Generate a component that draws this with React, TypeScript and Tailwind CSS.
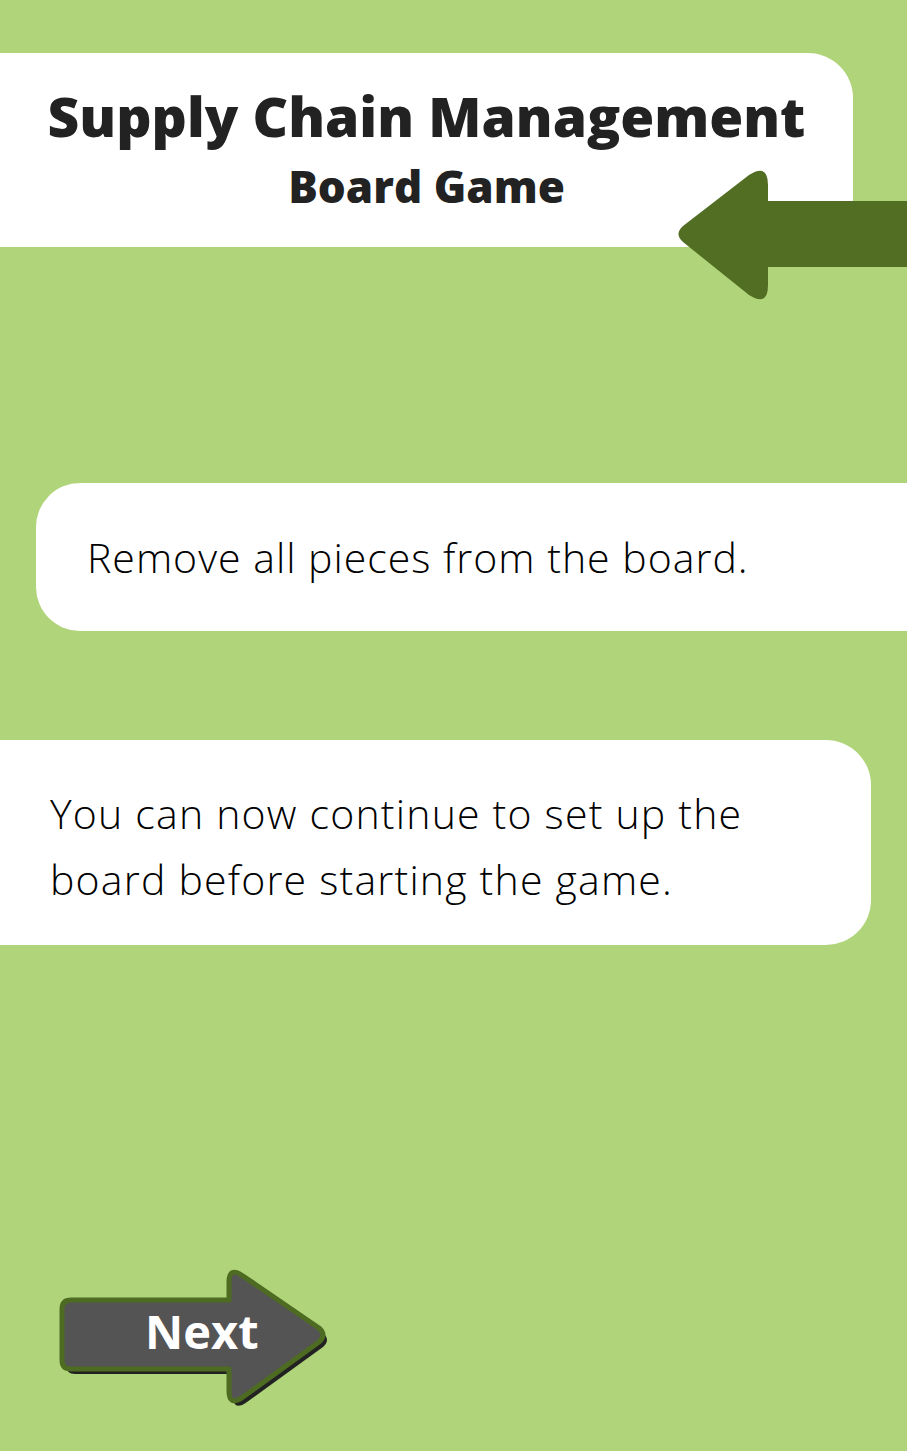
const LeftArrow = () => (
  <svg width="230" height="132" viewBox="0 0 230 132" className="absolute left-[677px] top-[116px]">
    <path
      d="M91 32 L230 32 L230 98 L91 98 L91 116 Q91 138 72 126 L6 73 Q-3 65 6 57 L72 6 Q91 -6 91 16 Z"
      fill="#526e23"
    />
  </svg>
);

const NextArrow = () => (
  <svg width="275" height="145" viewBox="0 0 275 145" className="absolute left-0 top-0">
    <g transform="translate(4 5)">
      <path
        d="M12 34 L170 34 L170 16 Q170 0 184 10 L260 62 Q268 69 260 76 L184 131 Q170 141 170 125 L170 103 L12 103 Q3 103 3 94 L3 43 Q3 34 12 34 Z"
        fill="#222222"
      />
    </g>
    <path
      d="M12 34 L170 34 L170 16 Q170 0 184 10 L260 62 Q268 69 260 76 L184 131 Q170 141 170 125 L170 103 L12 103 Q3 103 3 94 L3 43 Q3 34 12 34 Z"
      fill="#545454"
      stroke="#4d6b21"
      strokeWidth="5"
      strokeLinejoin="round"
    />
  </svg>
);

export default function App() {
  return (
    <div className="relative min-h-[1451px] overflow-hidden bg-[#b0d47a] pt-[53px] font-['Open_Sans',sans-serif]">
      <div className="relative flex h-[194px] w-[853px] flex-col items-center rounded-tr-[45px] bg-white text-[#222222]">
        <h1 className="mt-[35px] text-[55px] font-extrabold leading-none">Supply Chain Management</h1>
        <h2 className="mt-[21px] text-[44px] font-extrabold leading-none">Board Game</h2>
        <LeftArrow />
      </div>

      <div className="ml-[36px] mt-[236px] flex h-[148px] items-center rounded-l-[44px] bg-white pl-[51px]">
        <p className="text-[41px] font-[350] leading-none tracking-[1px] text-black">
          Remove all pieces from the board.
        </p>
      </div>

      <div className="mt-[109px] flex h-[205px] w-[871px] flex-col justify-center rounded-r-[45px] bg-white pl-[50px] pt-[6px]">
        <p className="text-[41px] font-[350] leading-[66px] tracking-[1.2px] text-black">
          You can now continue to set up the
          <br />
          board before starting the game.
        </p>
      </div>

      <div className="relative ml-[59px] mt-[321px] h-[145px] w-[275px]">
        <NextArrow />
        <span className="absolute left-[86px] top-[42px] text-[47px] font-bold leading-none text-white">
          Next
        </span>
      </div>
    </div>
  );
}
